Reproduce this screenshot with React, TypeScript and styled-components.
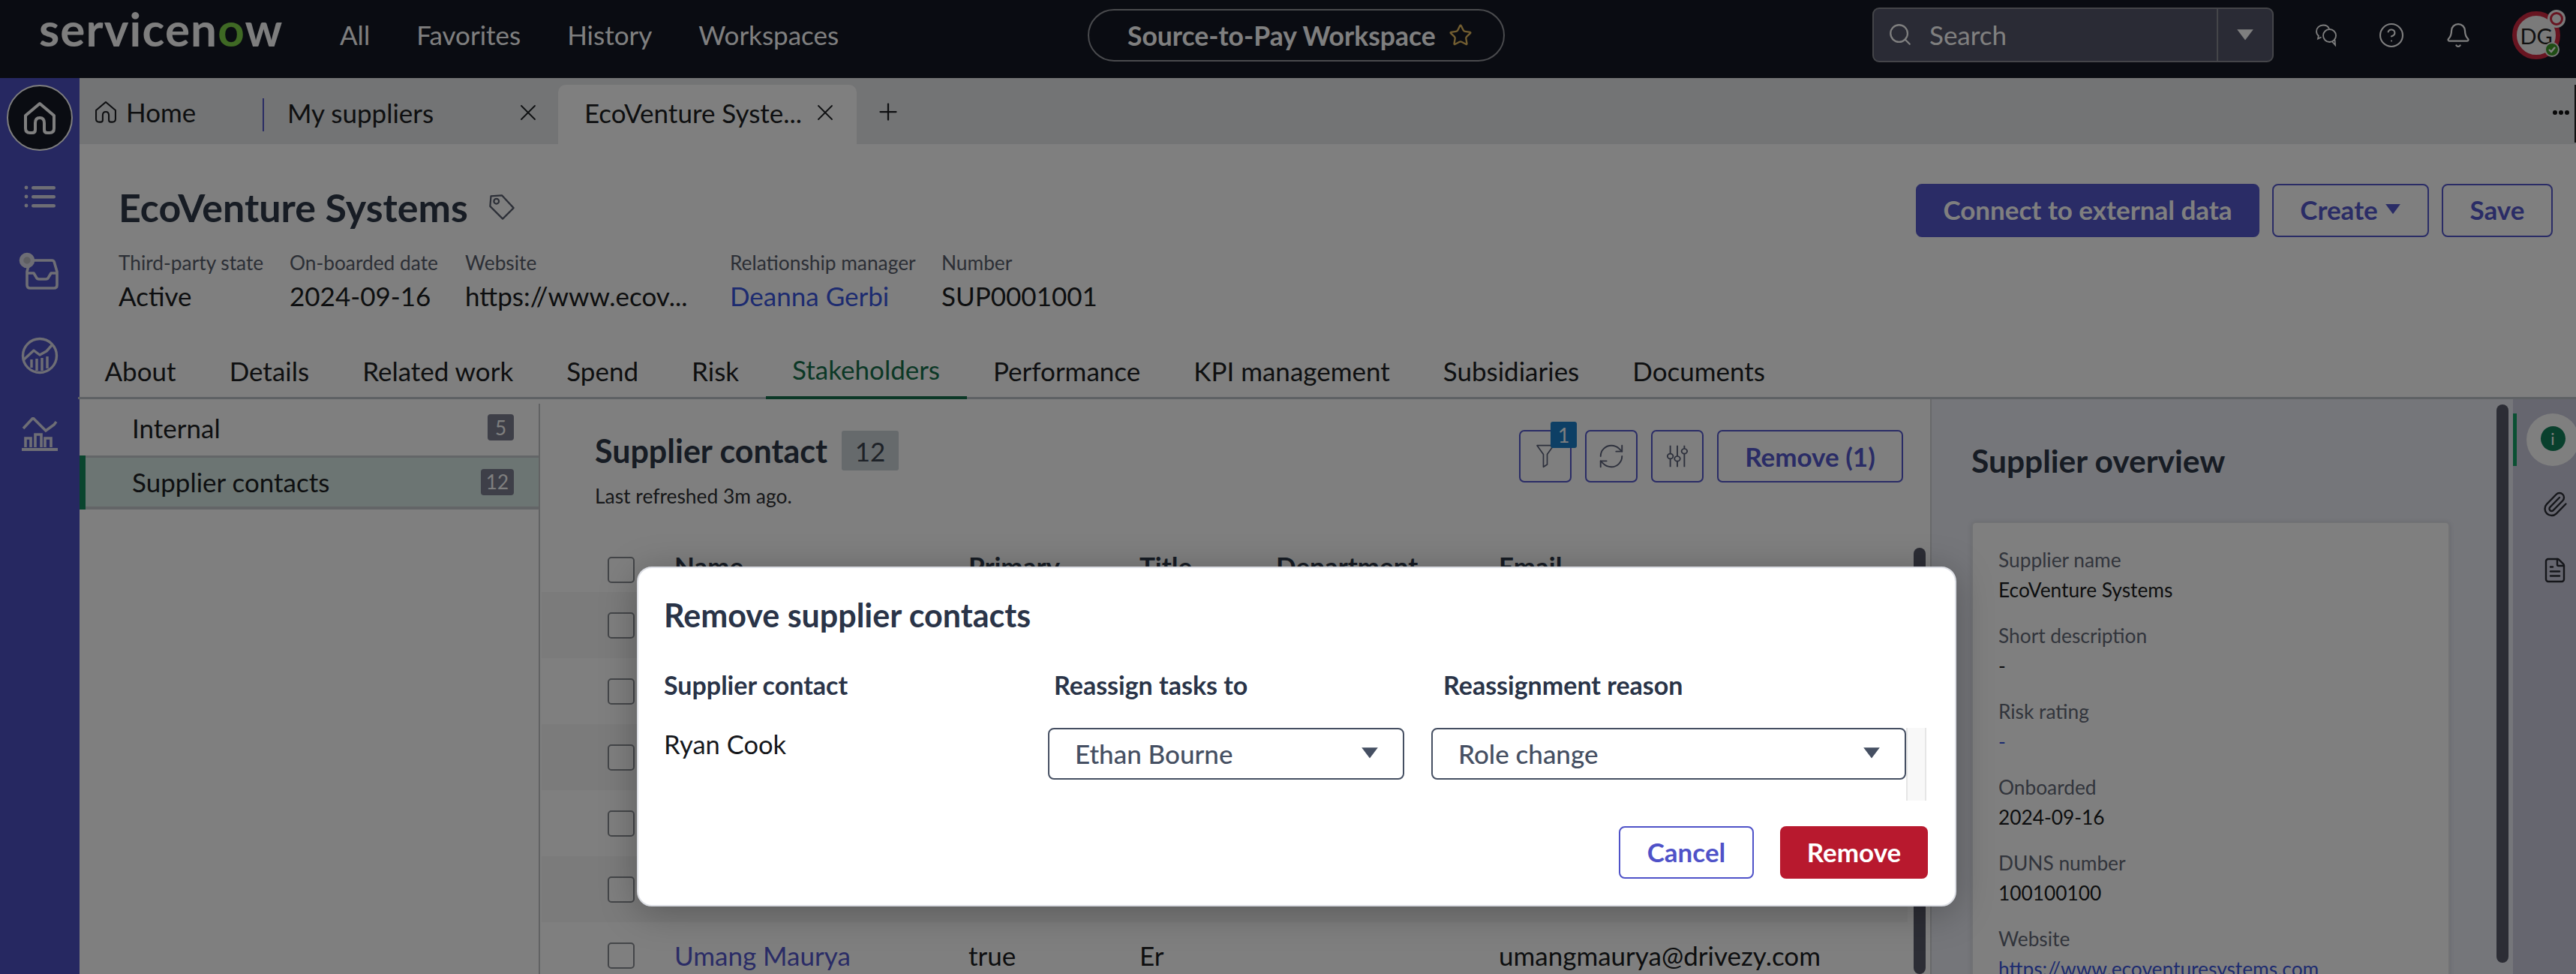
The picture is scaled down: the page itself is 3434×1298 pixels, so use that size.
import React from "react";
import styled, { createGlobalStyle } from "styled-components";
import { Bell, CircleHelp, FileText, Paperclip, Plus, RefreshCw, Search, Star, X } from "lucide-react";

const Global = createGlobalStyle`
  html, body { margin: 0; padding: 0; background: #fff; }
  * { box-sizing: border-box; }
  body { font-family: Lato, "Liberation Sans", sans-serif; color: #242628; }
`;

const Page = styled.div`
  position: relative;
  width: 3434px;
  height: 1298px;
  overflow: hidden;
  display: flex;
  flex-direction: column;
  background: #fff;
`;
const Dim = styled.div`
  position: absolute;
  inset: 0;
  background: rgba(0, 0, 0, 0.5);
`;

/* top bar */
const TopBar = styled.header`
  flex: none;
  height: 104px;
  background: #141824;
  color: #fff;
  display: flex;
  align-items: center;
  padding: 0 0 0 52px;
`;
const Logo = styled.div`
  align-self: flex-start;
  width: 401px;
  font-size: 62px;
  font-weight: 700;
  line-height: 76px;
  letter-spacing: 1.1px;
  color: #fcfcfc;
  white-space: nowrap;
  span { color: #7ed348; }
`;
const Nav = styled.nav`
  display: flex;
  gap: 62px;
  width: 997px;
  font-size: 35px;
  line-height: 44px;
  margin-top: -12px;
`;
const WorkspacePill = styled.div`
  width: 556px;
  height: 70px;
  margin-top: -10px;
  border: 2.5px solid #94969c;
  border-radius: 35px;
  padding-left: 51px;
  display: flex;
  align-items: center;
  gap: 17px;
  font-size: 35.500px;
  font-weight: 700;
`;
const SearchBox = styled.div`
  width: 535px;
  height: 73px;
  margin-left: 490px;
  margin-top: -11px;
  border: 2.5px solid #888a92;
  border-radius: 9px;
  background: #54566a;
  display: flex;
  align-items: center;
  font-size: 35px;
`;
const SearchField = styled.div`
  flex: 1;
  height: 100%;
  padding: 0 0 2px 18px;
  display: flex;
  align-items: center;
  gap: 22px;
  border-right: 2px solid #888a92;
`;
const SearchCaret = styled.div`
  width: 72px;
  display: flex;
  justify-content: center;
`;
const TopIcons = styled.div`
  display: flex;
  align-items: center;
  margin-left: 54px;
  margin-top: -10px;
  gap: 53px;
`;
const Avatar = styled.div`
  position: relative;
  width: 64px;
  height: 64px;
  margin-left: 1px;
  border-radius: 50%;
  border: 6px solid #d02a42;
  background: #f4f4f4;
  color: #222;
  display: flex;
  align-items: center;
  justify-content: center;
  font-size: 29px;
`;
const StatusDot = styled.span`
  position: absolute;
  right: -5px;
  bottom: -3px;
  width: 20px;
  height: 20px;
  border-radius: 50%;
  background: #3c9a28;
  border: 2px solid #eee;
  display: flex;
  align-items: center;
  justify-content: center;
`;
const AlertDot = styled.span`
  position: absolute;
  right: -13px;
  top: -8px;
  width: 24px;
  height: 24px;
  border-radius: 50%;
  background: #f4f4f4;
  display: flex;
  align-items: center;
  justify-content: center;
  &::after {
    content: "";
    width: 12px;
    height: 12px;
    border-radius: 50%;
    border: 3px solid #d02a42;
  }
`;

/* shell */
const Body = styled.div`
  flex: 1;
  min-height: 0;
  display: flex;
`;
const Rail = styled.aside`
  flex: none;
  width: 106px;
  background: #4c50c2;
  display: flex;
  flex-direction: column;
  align-items: center;
  padding-top: 9px;
  color: #dcdcea;
`;
const HomeDisc = styled.div`
  width: 88px;
  height: 88px;
  margin-bottom: 8px;
  border-radius: 50%;
  background: #141824;
  border: 2.5px solid #fff;
  color: #fff;
  display: flex;
  align-items: center;
  justify-content: center;
`;
const RailItem = styled.div`
  width: 100%;
  height: 106px;
  display: flex;
  align-items: center;
  justify-content: center;
`;
const Main = styled.main`
  flex: 1;
  min-width: 0;
  display: flex;
  flex-direction: column;
`;

/* tabs */
const TabBar = styled.div`
  flex: none;
  height: 88px;
  background: #e6e8ea;
  display: flex;
  align-items: stretch;
  font-size: 35px;
  color: #1c1e22;
`;
const HomeTab = styled.div`
  width: 244px;
  padding: 2px 0 0 20px;
  display: flex;
  align-items: center;
  gap: 12px;
`;
const PlainTab = styled.div`
  width: 394px;
  padding: 3px 22px 0 33px;
  display: flex;
  align-items: center;
  justify-content: space-between;
  position: relative;
  &::before {
    content: "";
    position: absolute;
    left: 0;
    top: 27px;
    width: 2px;
    height: 44px;
    background: #5558c8;
  }
`;
const ActiveTab = styled.div`
  width: 398px;
  margin-top: 9px;
  padding: 0 24px 5px 35px;
  background: #fff;
  border-radius: 10px 10px 0 0;
  display: flex;
  align-items: center;
  justify-content: space-between;
`;
const AddTab = styled.div`
  width: 84px;
  padding-top: 2px;
  display: flex;
  align-items: center;
  justify-content: center;
`;
const TabSpacer = styled.div`
  flex: 1;
`;
const TabOverflow = styled.div`
  width: 30px;
  margin-right: 3px;
  display: flex;
  align-items: center;
  justify-content: center;
  gap: 2px;
  padding-top: 4px;
  i {
    width: 6px;
    height: 6px;
    border-radius: 50%;
    background: #111;
  }
`;
const TabEdge = styled.div`
  width: 2px;
  margin: 9px 0 2px;
  background: #222;
`;

/* record header */
const RecordHead = styled.section`
  flex: none;
  height: 268px;
  padding: 53px 31px 0 52px;
  display: flex;
  justify-content: space-between;
  align-items: flex-start;
`;
const TitleRow = styled.div`
  display: flex;
  align-items: center;
  gap: 26px;
  height: 60px;
  margin-top: 1px;
  font-size: 52px;
  font-weight: 700;
  color: #2e3848;
`;
const Meta = styled.div`
  display: flex;
  margin-top: 27px;
`;
const MetaItem = styled.div<{ $w: number }>`
  width: ${(p) => p.$w}px;
  flex: none;
`;
const MetaLabel = styled.div`
  font-size: 26.300px;
  line-height: 34px;
  color: #585e6c;
`;
const MetaValue = styled.div`
  margin-top: 10px;
  font-size: 35px;
  line-height: 34px;
  color: #1a1c20;
`;
const BlueLink = styled.span`
  color: #3b57e0;
`;
const HeadActions = styled.div`
  display: flex;
  gap: 17px;
`;
const Button = styled.div<{ $w: number; $primary?: boolean }>`
  width: ${(p) => p.$w}px;
  height: 71px;
  border-radius: 8px;
  border: 2.5px solid #5558cc;
  background: ${(p) => (p.$primary ? "#5558cc" : "#fff")};
  color: ${(p) => (p.$primary ? "#fff" : "#5558cc")};
  font-size: 35px;
  font-weight: 700;
  display: flex;
  align-items: center;
  justify-content: center;
  gap: 9px;
  padding-bottom: 3px;
`;

/* section tabs */
const SectionTabs = styled.nav`
  flex: none;
  height: 72px;
  margin-left: -2px;
  border-bottom: 3px solid #bcc2c8;
  display: flex;
  font-size: 35px;
  color: #1c1e22;
`;
const SectionTab = styled.div<{ $active?: boolean }>`
  height: 72px;
  padding: 0 35.500px 4px;
  display: flex;
  align-items: center;
  color: ${(p) => (p.$active ? "#17704c" : "inherit")};
  border-bottom: ${(p) => (p.$active ? "4px solid #17704c" : "none")};
`;

/* content */
const Content = styled.div`
  flex: 1;
  min-height: 0;
  display: flex;
`;
const SideNav = styled.div`
  flex: none;
  width: 614px;
  position: relative;
  font-size: 35px;
  color: #1c1e22;
  &::after {
    content: "";
    position: absolute;
    right: 0;
    top: 6px;
    bottom: 0;
    width: 2px;
    background: #c4c6c8;
  }
`;
const SideRow = styled.div<{ $active?: boolean }>`
  height: ${(p) => (p.$active ? 72 : 75)}px;
  padding: ${(p) => (p.$active ? "0 35px 2px 62px" : "0 35px 0 70px")};
  display: flex;
  align-items: center;
  justify-content: space-between;
  background: ${(p) => (p.$active ? "#d8ebe6" : "transparent")};
  border-left: ${(p) => (p.$active ? "8px solid #148a5c" : "none")};
  box-shadow: ${(p) => (p.$active ? "inset 0 3px 0 #c7cdd0, inset 0 -4px 0 #c7cbce" : "none")};
`;
const Count = styled.span`
  min-width: 35px;
  height: 35px;
  padding: 0 7px;
  border-radius: 4px;
  background: #7c7e90;
  color: #fff;
  font-size: 26px;
  display: flex;
  align-items: center;
  justify-content: center;
`;
const ListPanel = styled.section`
  flex: 1;
  min-width: 0;
  display: flex;
  flex-direction: column;
`;
const ListHead = styled.div`
  flex: none;
  height: 198px;
  padding: 41px 36px 0 73px;
  display: flex;
  justify-content: space-between;
  align-items: flex-start;
`;
const ListTitle = styled.div`
  display: flex;
  align-items: center;
  gap: 19px;
  height: 53px;
  margin-top: 1px;
  font-size: 43px;
  font-weight: 700;
  color: #2e3848;
`;
const TitleCount = styled.span`
  width: 76px;
  height: 53px;
  border-radius: 3px;
  background: #ccd4d8;
  color: #3c4450;
  font-size: 35px;
  font-weight: 400;
  display: flex;
  align-items: center;
  justify-content: center;
`;
const Refreshed = styled.div`
  margin-top: 17px;
  font-size: 26.400px;
  line-height: 34px;
  color: #2e3034;
`;
const Toolbar = styled.div`
  display: flex;
  gap: 18px;
`;
const ToolButton = styled.div`
  position: relative;
  width: 70px;
  height: 70px;
  border: 2.5px solid #5558cc;
  border-radius: 7px;
  color: #5a6078;
  display: flex;
  align-items: center;
  justify-content: center;
`;
const ToolBadge = styled.span`
  position: absolute;
  right: -9px;
  top: -13px;
  width: 35px;
  height: 35px;
  border-radius: 3px;
  background: #1a7ecb;
  color: #fff;
  font-size: 27px;
  display: flex;
  align-items: center;
  justify-content: center;
`;
const RemoveTool = styled(ToolButton)`
  width: 248px;
  color: #5558cc;
  font-size: 35px;
  font-weight: 700;
`;
const TableArea = styled.div`
  flex: 1;
  min-height: 0;
  display: flex;
  padding-right: 6px;
`;
const Table = styled.div`
  flex: 1;
  min-width: 0;
  margin-left: 2px;
`;
const Row = styled.div<{ $h: number; $stripe?: boolean; $head?: boolean }>`
  height: ${(p) => p.$h}px;
  display: grid;
  grid-template-columns: 177px 392px 228px 182px 297px 1fr;
  align-items: center;
  font-size: 35px;
  font-weight: ${(p) => (p.$head ? 700 : 400)};
  color: ${(p) => (p.$head ? "#2e3848" : "#1a1c20")};
  background: ${(p) => (p.$stripe ? "#f6f6f6" : "transparent")};
`;
const HeadCell = styled.span`
  margin-top: -11px;
`;
const Check = styled.span`
  display: block;
  width: 36px;
  height: 35px;
  margin-left: 88px;
  border: 2.5px solid #888c92;
  border-radius: 5px;
  background: #fff;
`;
const NameLink = styled.span`
  color: #5558cc;
`;
const Scrollbar = styled.div<{ $top?: number; $bottom?: number }>`
  flex: none;
  width: 16px;
  margin-left: 8px;
  margin-top: ${(p) => p.$top ?? 0}px;
  margin-bottom: ${(p) => p.$bottom ?? 0}px;
  border-radius: 8px;
  background: #585a6a;
`;

/* overview */
const Overview = styled.aside`
  flex: none;
  width: 777px;
  border-left: 2px solid #d0d2d6;
  background: #eaecf4;
  display: flex;
  padding-right: 6px;
`;
const OverviewBody = styled.div`
  flex: 1;
  min-width: 0;
  padding: 57px 0 0 53px;
`;
const OverviewTitle = styled.div`
  height: 50px;
  line-height: 50px;
  font-size: 42.500px;
  font-weight: 700;
  color: #2e3848;
`;
const Card = styled.div`
  width: 638px;
  margin-top: 56px;
  height: 640px;
  padding: 29px 34px 0;
  background: #fff;
  border: 2px solid #e2e4e8;
  border-radius: 6px;
  box-shadow: 0 1px 6px rgba(60, 70, 90, 0.15);
`;
const Field = styled.div`
  margin-bottom: 21px;
`;
const FieldLabel = styled.div`
  font-size: 26.300px;
  line-height: 40px;
  color: #646a78;
`;
const FieldValue = styled.div<{ $link?: boolean }>`
  font-size: 26.300px;
  line-height: 40px;
  color: ${(p) => (p.$link ? "#3b57e0" : "#1a1c20")};
`;
const SideIcons = styled.aside`
  flex: none;
  width: 84px;
  background: #ccccde;
  overflow: hidden;
  padding-top: 19px;
  color: #2a2c34;
  display: flex;
  flex-direction: column;
`;
const ActiveIcon = styled.div`
  width: 88px;
  height: 70px;
  display: flex;
  align-items: center;
  border-left: 5px solid #17a066;
`;
const ActiveDisc = styled.div`
  margin-left: 13px;
  width: 70px;
  height: 70px;
  border-radius: 50%;
  background: #fff;
  display: flex;
  align-items: center;
  justify-content: center;
  padding-bottom: 3px;
`;
const InfoDot = styled.span`
  width: 33px;
  height: 33px;
  border-radius: 50%;
  background: #12805a;
  color: #fff;
  font-size: 22px;
  display: flex;
  align-items: center;
  justify-content: center;
`;
const SideIcon = styled.div<{ $mt: number }>`
  margin-top: ${(p) => p.$mt}px;
  padding-left: 38px;
  display: flex;
`;

/* dialog */
const Dialog = styled.div`
  position: absolute;
  left: 849px;
  top: 755px;
  width: 1759px;
  height: 453px;
  padding: 38px 34px 0;
  background: #fff;
  border: 2.5px solid #dcdee4;
  border-radius: 20px;
  box-shadow: 0 8px 50px rgba(0, 0, 0, 0.28);
`;
const DialogTitle = styled.div`
  height: 50px;
  line-height: 50px;
  font-size: 43px;
  font-weight: 700;
  color: #2a3448;
`;
const DialogGrid = styled.div`
  display: grid;
  grid-template-columns: 512px 475px 669px 27px;
  column-gap: 0;
`;
const ColHead = styled.div<{ $pl: number }>`
  height: 40px;
  line-height: 40px;
  margin-top: 48px;
  margin-bottom: 37px;
  padding-left: ${(p) => p.$pl}px;
  font-size: 34px;
  font-weight: 700;
  color: #2a3448;
  white-space: nowrap;
`;
const ContactName = styled.div`
  font-size: 34.500px;
  line-height: 44px;
  color: #16181c;
`;
const Select = styled.div<{ $ml?: number }>`
  height: 69px;
  margin-left: ${(p) => p.$ml ?? 0}px;
  padding: 0 32px 2px 34px;
  border: 2.5px solid #454f62;
  border-radius: 8px;
  display: flex;
  align-items: center;
  justify-content: space-between;
  font-size: 35px;
  font-weight: 500;
  color: #454f62;
`;
const DialogTrack = styled.div`
  height: 97px;
  background: #f8f8f8;
  border-left: 2px solid #e6e6e6;
  border-right: 2px solid #e6e6e6;
`;
const Cell = styled.div`
  height: 97px;
`;
const DialogFoot = styled.div`
  display: flex;
  justify-content: flex-end;
  gap: 35px;
  margin-top: 34px;
  padding-right: 2px;
`;
const CancelButton = styled.div`
  width: 180px;
  height: 70px;
  padding-bottom: 2px;
  border: 2.5px solid #4f52c8;
  border-radius: 8px;
  color: #4f52c8;
  font-size: 35px;
  font-weight: 700;
  display: flex;
  align-items: center;
  justify-content: center;
`;
const RemoveButton = styled.div`
  width: 197px;
  height: 70px;
  padding-bottom: 2px;
  border-radius: 8px;
  background: #b8192e;
  color: #fff;
  font-size: 35px;
  font-weight: 700;
  display: flex;
  align-items: center;
  justify-content: center;
`;

/* drawings */
const Caret = ({ size = 24, color = "currentColor" }: { size?: number; color?: string }) => (
  <svg width={size} height={size * 0.7} viewBox="0 0 20 14">
    <path d="M1 1h18L10 13z" fill={color} />
  </svg>
);
const HomeGlyph = ({ size, w }: { size: number; w: number }) => (
  <svg width={size} height={size} viewBox="0 0 44 44" fill="none" stroke="currentColor" strokeWidth={w} strokeLinejoin="round">
    <path d="M3 19 22 3l19 16v17q0 6-6 6h-3q-4 0-4-4v-9q0-7-6-7t-6 7v9q0 4-4 4H9q-6 0-6-6z" />
  </svg>
);
const ListGlyph = () => (
  <svg width="42" height="32" viewBox="0 0 42 32" fill="currentColor">
    <circle cx="3" cy="4" r="2.4" /><circle cx="3" cy="16" r="2.4" /><circle cx="3" cy="28" r="2.4" />
    <rect x="10" y="2" width="32" height="4.4" rx="2.2" /><rect x="10" y="14" width="32" height="4.4" rx="2.2" /><rect x="10" y="26" width="32" height="4.4" rx="2.2" />
  </svg>
);
const InboxGlyph = () => (
  <svg width="54" height="52" viewBox="0 6 54 52" fill="none" stroke="currentColor" strokeWidth="3.6" strokeLinejoin="round" overflow="visible">
    <path d="M17 11h26q3 0 3.5 3L50 26v18q0 4-4 4H14q-4 0-4-4V26l2-8" />
    <path d="M10 28h9l3 5q1 3 4 3h9q3 0 4-3l3-5h8" />
    <circle cx="10" cy="11" r="6.5" fill="#bcbcc4" />
    <circle cx="10" cy="11" r="8.5" />
  </svg>
);
const ChartGlyph = () => (
  <svg width="50" height="50" viewBox="0 0 50 50" fill="none" stroke="currentColor" strokeWidth="3.4" strokeLinejoin="round">
    <circle cx="25" cy="25" r="22.5" />
    <path d="M4 30 17 18l8 6 9-5 8-9" />
    <path d="M14 41V30M21 45V29M28 45V28M35 42V26" />
  </svg>
);
const TrendGlyph = () => (
  <svg width="50" height="48" viewBox="0 2 50 48" fill="none" stroke="currentColor" strokeWidth="3.6">
    <path d="M3 17 16 3l17 17 11-8 3-4" />
    <path d="M6 42V30h7v12M19 42V25h8v17M32 42V30h8v12" />
    <path d="M1 45h48" strokeWidth="4" />
  </svg>
);
const ChatGlyph = () => (
  <svg width="32" height="32" viewBox="0 0 32 32" fill="none" stroke="currentColor" strokeWidth="1.8">
    <path d="M12 2.5c-5 0-9 3.6-9 8.2 0 2.5 1 4.5 2.800 6l-.8 4 4.500-2.200" />
    <path d="M12 2.500c4 0 7 2 8 5" />
    <circle cx="20.500" cy="16.500" r="8.500" />
    <path d="m24 24.500 4 4.500-.5-7" />
  </svg>
);
const TagGlyph = () => (
  <svg width="38" height="38" viewBox="0 0 34 34" fill="none" stroke="#5a6070" strokeWidth="2">
    <path d="M4 4 17 3l14 15-13 13L3 16z" strokeLinejoin="round" />
    <circle cx="10.500" cy="10" r="3" />
  </svg>
);
const FunnelGlyph = () => (
  <svg width="26" height="32" viewBox="0 0 30 38" fill="none" stroke="currentColor" strokeWidth="2">
    <path d="M2 2h26L18 16v16l-6 4V16z" strokeLinejoin="round" />
  </svg>
);
const SlidersGlyph = () => (
  <svg width="30" height="30" viewBox="0 0 32 36" fill="none" stroke="currentColor" strokeWidth="2" preserveAspectRatio="none">
    <path d="M6 1v13M6 22v13M16 1v17M16 26v9M26 1v5M26 14v21" />
    <circle cx="6" cy="18" r="4" /><circle cx="16" cy="22" r="4" /><circle cx="26" cy="10" r="4" />
  </svg>
);

const metaCols = [
  { w: 228, label: "Third-party state", value: "Active" },
  { w: 234, label: "On-boarded date", value: "2024-09-16" },
  { w: 353, label: "Website", value: "https://www.ecov..." },
  { w: 282, label: "Relationship manager", value: "Deanna Gerbi", link: true },
  { w: 300, label: "Number", value: "SUP0001001" },
];
const sections = ["About", "Details", "Related work", "Spend", "Risk", "Stakeholders", "Performance", "KPI management", "Subsidiaries", "Documents"];
const fields = [
  { label: "Supplier name", value: "EcoVenture Systems" },
  { label: "Short description", value: "-" },
  { label: "Risk rating", value: "-", link: true },
  { label: "Onboarded", value: "2024-09-16" },
  { label: "DUNS number", value: "100100100" },
  { label: "Website", value: "https://www.ecoventuresystems.com", link: true },
];

export default function App() {
  return (
    <Page>
      <Global />
      <TopBar>
        <Logo>servicen<span>o</span>w</Logo>
        <Nav>
          <span>All</span><span>Favorites</span><span>History</span><span>Workspaces</span>
        </Nav>
        <WorkspacePill>
          Source-to-Pay Workspace
          <Star size={32} color="#e6bd62" strokeWidth={1.8} />
        </WorkspacePill>
        <SearchBox>
          <SearchField>
            <Search size={34} strokeWidth={1.6} />
            Search
          </SearchField>
          <SearchCaret><Caret /></SearchCaret>
        </SearchBox>
        <TopIcons>
          <ChatGlyph />
          <CircleHelp size={36} strokeWidth={1.4} />
          <Bell size={36} strokeWidth={1.5} />
          <Avatar>
            DG
            <AlertDot />
            <StatusDot>
              <svg width="12" height="12" viewBox="0 0 12 12" fill="none" stroke="#fff" strokeWidth="2.400"><path d="m2 6 3 3 5-6" /></svg>
            </StatusDot>
          </Avatar>
        </TopIcons>
      </TopBar>
      <Body>
        <Rail>
          <HomeDisc><HomeGlyph size={44} w={4} /></HomeDisc>
          <RailItem><ListGlyph /></RailItem>
          <RailItem><InboxGlyph /></RailItem>
          <RailItem><ChartGlyph /></RailItem>
          <RailItem><TrendGlyph /></RailItem>
        </Rail>
        <Main>
          <TabBar>
            <HomeTab><HomeGlyph size={30} w={3} />Home</HomeTab>
            <PlainTab>My suppliers<X size={36} strokeWidth={1.2} /></PlainTab>
            <ActiveTab>EcoVenture Syste...<X size={36} strokeWidth={1.2} /></ActiveTab>
            <AddTab><Plus size={36} strokeWidth={1.5} /></AddTab>
            <TabSpacer />
            <TabOverflow><i /><i /><i /></TabOverflow>
            <TabEdge />
          </TabBar>
          <RecordHead>
            <div>
              <TitleRow>EcoVenture Systems <TagGlyph /></TitleRow>
              <Meta>
                {metaCols.map((m) => (
                  <MetaItem key={m.label} $w={m.w}>
                    <MetaLabel>{m.label}</MetaLabel>
                    <MetaValue>{m.link ? <BlueLink>{m.value}</BlueLink> : m.value}</MetaValue>
                  </MetaItem>
                ))}
              </Meta>
            </div>
            <HeadActions>
              <Button $w={458} $primary>Connect to external data</Button>
              <Button $w={209}>Create <Caret size={22} /></Button>
              <Button $w={148}>Save</Button>
            </HeadActions>
          </RecordHead>
          <SectionTabs>
            {sections.map((s) => (
              <SectionTab key={s} $active={s === "Stakeholders"}>{s}</SectionTab>
            ))}
          </SectionTabs>
          <Content>
            <SideNav>
              <SideRow>Internal<Count>5</Count></SideRow>
              <SideRow $active>Supplier contacts<Count>12</Count></SideRow>
            </SideNav>
            <ListPanel>
              <ListHead>
                <div>
                  <ListTitle>Supplier contact<TitleCount>12</TitleCount></ListTitle>
                  <Refreshed>Last refreshed 3m ago.</Refreshed>
                </div>
                <Toolbar>
                  <ToolButton><FunnelGlyph /><ToolBadge>1</ToolBadge></ToolButton>
                  <ToolButton><RefreshCw size={38} strokeWidth={1.2} /></ToolButton>
                  <ToolButton><SlidersGlyph /></ToolButton>
                  <RemoveTool>Remove (1)</RemoveTool>
                </Toolbar>
              </ListHead>
              <TableArea>
                <Table>
                  <Row $h={59} $head>
                    <Check /><HeadCell>Name</HeadCell><HeadCell>Primary</HeadCell><HeadCell>Title</HeadCell><HeadCell>Department</HeadCell><HeadCell>Email</HeadCell>
                  </Row>
                  <Row $h={88} $stripe><Check /></Row>
                  <Row $h={88}><Check /></Row>
                  <Row $h={88} $stripe><Check /></Row>
                  <Row $h={88}><Check /></Row>
                  <Row $h={88} $stripe><Check /></Row>
                  <Row $h={88}>
                    <Check /><NameLink>Umang Maurya</NameLink><span>true</span><span>Er</span><span /><span>umangmaurya@drivezy.com</span>
                  </Row>
                </Table>
                <Scrollbar />
              </TableArea>
            </ListPanel>
            <Overview>
              <OverviewBody>
                <OverviewTitle>Supplier overview</OverviewTitle>
                <Card>
                  {fields.map((f) => (
                    <Field key={f.label}>
                      <FieldLabel>{f.label}</FieldLabel>
                      <FieldValue $link={f.link}>{f.value}</FieldValue>
                    </Field>
                  ))}
                </Card>
              </OverviewBody>
              <Scrollbar $top={7} $bottom={15} />
            </Overview>
            <SideIcons>
              <ActiveIcon><ActiveDisc><InfoDot>i</InfoDot></ActiveDisc></ActiveIcon>
              <SideIcon $mt={33}><Paperclip size={36} strokeWidth={1.6} /></SideIcon>
              <SideIcon $mt={52}><FileText size={36} strokeWidth={1.6} /></SideIcon>
            </SideIcons>
          </Content>
        </Main>
      </Body>
      <Dim />
      <Dialog>
        <DialogTitle>Remove supplier contacts</DialogTitle>
        <DialogGrid>
          <ColHead $pl={0}>Supplier contact</ColHead>
          <ColHead $pl={8}>Reassign tasks to</ColHead>
          <ColHead $pl={52}>Reassignment reason</ColHead>
          <div />
          <Cell><ContactName>Ryan Cook</ContactName></Cell>
          <Cell><Select>Ethan Bourne<Caret color="#454f62" /></Select></Cell>
          <Cell><Select $ml={36}>Role change<Caret color="#454f62" /></Select></Cell>
          <DialogTrack />
        </DialogGrid>
        <DialogFoot>
          <CancelButton>Cancel</CancelButton>
          <RemoveButton>Remove</RemoveButton>
        </DialogFoot>
      </Dialog>
    </Page>
  );
}
